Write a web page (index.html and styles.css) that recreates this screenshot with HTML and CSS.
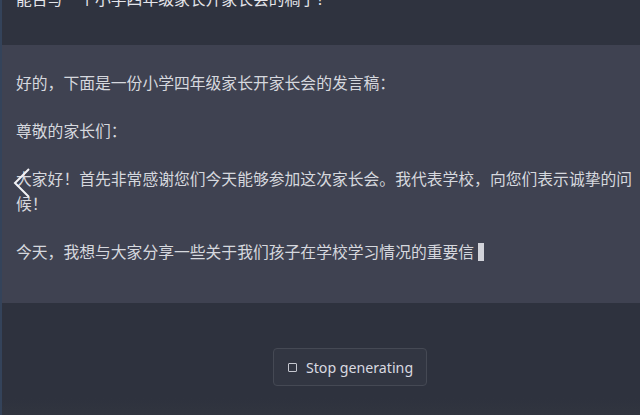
FILE: index.html
```html
<!DOCTYPE html>
<html lang="zh-CN">
<head>
<meta charset="utf-8">
<link rel="stylesheet" href="styles.css">
</head>
<body>
<div class="page">
  <section class="msg msg-user">
    <p class="line">能否写一个小学四年级家长开家长会的稿子？</p>
  </section>
  <section class="msg msg-bot">
    <p class="line">好的，下面是一份小学四年级家长开家长会的发言稿：</p>
    <p class="line">尊敬的家长们：</p>
    <p class="line">大家好！首先非常感谢您们今天能够参加这次家长会。我代表学校，向您们表示诚挚的问候！</p>
    <p class="line">今天，我想与大家分享一些关于我们孩子在学校学习情况的重要信<span class="cursor"></span></p>
    <svg class="chevron" width="20" height="32" viewBox="0 0 20 32"><path d="M17 2 L3 16 L17 30" fill="none" stroke="#f2f2f5" stroke-width="2"/></svg>
  </section>
  <section class="footer">
    <button class="stop"><span class="stop-icon"></span>Stop generating</button>
  </section>
</div>
</body>
</html>
```

FILE: styles.css
```css
html, body {
  margin: 0;
  padding: 0;
  width: 640px;
  height: 415px;
  overflow: hidden;
  background: #2e323e;
}
.page {
  display: flex;
  flex-direction: column;
  height: 415px;
  font-family: "Noto Sans CJK SC", "Liberation Sans", sans-serif;
  border-left: 2px solid #34435a;
  box-sizing: border-box;
}
.line {
  margin: 0;
  font-size: 15.8px;
  line-height: 25px;
  color: #d6d8de;
}
.msg {
  padding: 0 0 0 14px;
}
.msg-user {
  height: 45px;
  background: #2f333f;
  overflow: hidden;
}
.msg-user .line {
  margin-top: -14px;
  color: #e4e5ea;
}
.msg-bot {
  position: relative;
  height: 258px;
  box-sizing: border-box;
  padding-top: 25px;
  background: #3f4251;
  display: flex;
  flex-direction: column;
  gap: 23px;
}
.cursor {
  display: inline-block;
  width: 6px;
  height: 18px;
  margin-left: 4px;
  vertical-align: -3px;
  background: #d2d3da;
}
.chevron {
  position: absolute;
  left: 10px;
  top: 122px;
}
.footer {
  flex: 1;
  display: flex;
  justify-content: center;
  align-items: flex-start;
  padding-top: 45px;
  padding-left: 58px;
  background: linear-gradient(#2e323e 0, #2e323e 85%, #31353f 100%);
}
.stop {
  display: flex;
  align-items: center;
  gap: 9px;
  height: 38px;
  padding: 0 13px 0 14px;
  background: #323642;
  border: 1px solid #454954;
  border-radius: 4px;
  color: #d9dae0;
  font-family: "Noto Sans", "Open Sans", sans-serif;
  font-size: 14.2px;
}
.stop-icon {
  width: 7px;
  height: 7px;
  border: 1.5px solid #c5c7cf;
  border-radius: 1px;
}
```
